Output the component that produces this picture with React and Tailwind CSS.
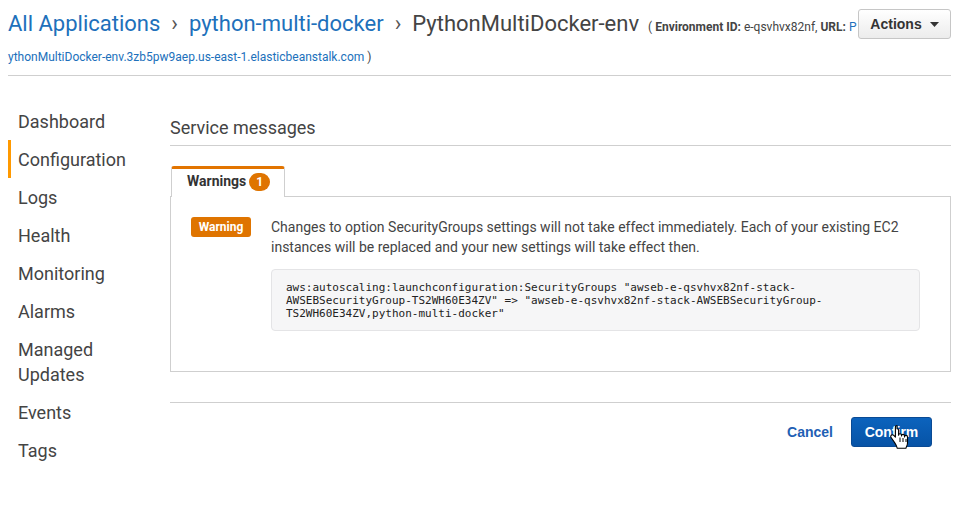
import { useState } from 'react'

const navItems = ['Dashboard', 'Configuration', 'Logs', 'Health', 'Monitoring', 'Alarms', 'Managed Updates', 'Events', 'Tags']

function Chevron() {
  return <span className="mx-[11px] text-[22px] leading-[28px] text-[#555]">›</span>
}

function HandCursor() {
  return (
    <svg width="20" height="28" viewBox="0 0 20 28" className="absolute left-[38px] top-[6px] pointer-events-none">
      <path
        d="M7 1.5c-1 0-1.6.7-1.6 1.6v10l-1.6-1.7c-.8-.8-2.1-.8-2.7 0-.5.6-.4 1.5 0 2.1l3.7 5.4c1 1.5 2 3.6 2.5 5.4h8.6c.5-1.6 1.6-3.2 1.6-5.4v-6c0-.9-.7-1.5-1.5-1.5s-1.5.6-1.5 1.5v-1c0-.9-.7-1.5-1.5-1.5s-1.5.6-1.5 1.5v-.6c0-.9-.7-1.5-1.5-1.5s-1.4.6-1.4 1.5v-5c0-.9-.7-1.6-1.6-1.6z"
        fill="#fff"
        stroke="#000"
        strokeWidth="1.1"
        strokeLinejoin="round"
      />
      <path d="M10 13.5v4.5M13 14v4M16 15v3" stroke="#000" strokeWidth="1" />
    </svg>
  )
}

export default function App() {
  const [active] = useState('Configuration')

  return (
    <main className="w-[965px] h-[505px] bg-white pl-[8px] pr-[14px] overflow-hidden" style={{ fontFamily: 'Roboto, "Noto Sans", sans-serif' }}>
      {/* header */}
      <div className="flex items-start pt-[9px]">
        <div className="flex-1 min-w-0 flex items-baseline whitespace-nowrap pt-[1px]">
          <span className="text-[22px] leading-[28px] text-[#2070bb]">All Applications</span>
          <Chevron />
          <span className="text-[22px] leading-[28px] text-[#2070bb]">python-multi-docker</span>
          <Chevron />
          <span className="text-[22px] leading-[28px] text-[#444]">PythonMultiDocker-env</span>
          <span className="ml-[9px] text-[12px] text-[#444]">
            ( <b>Environment ID:</b> e-qsvhvx82nf, <b>URL:</b> <span className="text-[#2070bb]">P</span>
          </span>
        </div>
        <button
          className="ml-[2px] w-[93px] h-[30px] border border-[#c6c6c6] rounded-[3px] bg-gradient-to-b from-white to-[#ececec] flex items-center justify-center gap-[8px] text-[14px] font-bold text-[#333] shrink-0"
          style={{ fontFamily: '"Liberation Sans", Arial, sans-serif' }}
        >
          Actions
          <svg width="9" height="5" viewBox="0 0 9 5"><path d="M0 0h9L4.5 5z" fill="#333" /></svg>
        </button>
      </div>
      <div className="text-[12px] leading-[16px] mt-[10px] text-[#444]">
        <span className="text-[#2070bb]">ythonMultiDocker-env.3zb5pw9aep.us-east-1.elasticbeanstalk.com</span> )
      </div>
      <div className="h-px bg-[#cfcfcf] mt-[10px]" />

      <div className="flex">
        {/* sidebar */}
        <nav className="w-[162px] pt-[26px] shrink-0">
          {navItems.map(item => (
            <div
              key={item}
              className={`text-[18px] leading-[25px] py-[6.5px] pl-[7px] text-[#444] border-l-[3px] ${item === active ? 'border-[#ff9900]' : 'border-transparent'}`}
            >
              {item === 'Managed Updates' ? (<>Managed<br />Updates</>) : item}
            </div>
          ))}
        </nav>

        {/* content */}
        <section className="flex-1 pt-[40px]">
          <h2 className="text-[18px] leading-[24px] text-[#444] pb-[5px] border-b border-[#cfcfcf]">Service messages</h2>

          <div className="mt-[20px] relative">
            <div className="flex">
              <div className="ml-[1px] w-[114px] h-[31px] border-t-[3px] border-[#e27400] border-x border-x-[#cfcfcf] rounded-t-[3px] bg-white relative z-10 -mb-px flex items-center pl-[15px] pb-[3px] gap-[3px]">
                <span className="text-[14px] font-bold text-[#333]">Warnings</span>
                <span className="h-[18px] px-[7px] rounded-full bg-[#df7400] text-white text-[12px] font-bold flex items-center leading-none">1</span>
              </div>
            </div>
            <div className="border border-[#cfcfcf] pl-[20px] pr-[30px] pt-[20px] pb-[40px] flex gap-[20px]">
              <span className="shrink-0 h-[20px] w-[60px] rounded-[3px] bg-[#df7400] text-white text-[12px] font-bold flex items-center justify-center">Warning</span>
              <div className="flex-1">
                <p className="text-[14px] leading-[20px] text-[#444]">
                  Changes to option SecurityGroups settings will not take effect immediately. Each of your existing EC2 instances will be replaced and your new settings will take effect then.
                </p>
                <pre
                  className="mt-[12px] bg-[#f6f6f7] border border-[#e4e4e6] rounded-[4px] px-[14px] pt-[11px] pb-[10px] text-[11px] leading-[13px] text-[#222] whitespace-pre-wrap"
                  style={{ fontFamily: '"DejaVu Sans Mono", "Liberation Mono", monospace' }}
                >
                  {'aws:autoscaling:launchconfiguration:SecurityGroups "awseb-e-qsvhvx82nf-stack-\nAWSEBSecurityGroup-TS2WH60E34ZV" => "awseb-e-qsvhvx82nf-stack-AWSEBSecurityGroup-\nTS2WH60E34ZV,python-multi-docker"'}
                </pre>
              </div>
            </div>
          </div>

          <div className="h-px bg-[#cfcfcf] mt-[30px]" />
          <div className="flex justify-end items-center mt-[14px] pr-[19px]" style={{ fontFamily: '"Liberation Sans", Arial, sans-serif' }}>
            <button className="text-[14px] font-bold text-[#1f5fb4] mr-[18px]">Cancel</button>
            <button className="relative w-[81px] h-[30px] rounded-[3px] border border-[#0a4a94] bg-gradient-to-b from-[#0c63bd] to-[#0753a6] text-white text-[14px] font-bold">
              Confirm
              <HandCursor />
            </button>
          </div>
        </section>
      </div>
    </main>
  )
}
